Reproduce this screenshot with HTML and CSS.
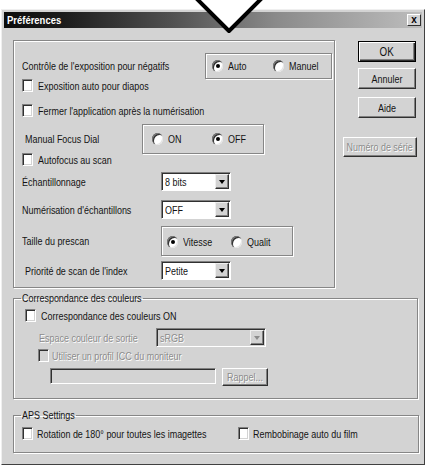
FILE: index.html
```html
<!DOCTYPE html>
<html lang="fr">
<head>
<meta charset="utf-8">
<title>Préférences</title>
<link rel="stylesheet" href="styles.css">
</head>
<body>
<svg class="chevron" width="426" height="40" viewBox="0 0 426 40"><path d="M194,-4 L229,31 L264,-4" fill="#fff" stroke="#000" stroke-width="4" stroke-linejoin="round"/></svg>
<div class="dialog">
  <div class="titlebar"><span class="title"><span class="t">Préférences</span></span><span class="close">x</span></div>
  <div class="client">
    <div class="top">
      <div class="mainbox">
        <div class="row r1">
          <span class="lbl w183"><span class="t">Contrôle de l'exposition pour négatifs</span></span>
          <div class="rgroup g1">
            <span class="opt o61"><span class="radio on"></span><span class="t">Auto</span></span>
            <span class="opt"><span class="radio"></span><span class="t">Manuel</span></span>
          </div>
        </div>
        <div class="row r2"><span class="cb"></span><span class="cbt"><span class="t">Exposition auto pour diapos</span></span></div>
        <div class="row r3"><span class="cb"></span><span class="cbt"><span class="t">Fermer l'application après la numérisation</span></span></div>
        <div class="row r4">
          <span class="lbl w120 ind"><span class="t">Manual Focus Dial</span></span>
          <div class="rgroup g4">
            <span class="opt o60"><span class="radio"></span><span class="t">ON</span></span>
            <span class="opt"><span class="radio on"></span><span class="t">OFF</span></span>
          </div>
        </div>
        <div class="row r5"><span class="cb"></span><span class="cbt"><span class="t">Autofocus au scan</span></span></div>
        <div class="row r6"><span class="lbl w139"><span class="t">Échantillonnage</span></span><div class="sel"><span class="val"><span class="t">8 bits</span></span><span class="drop"></span></div></div>
        <div class="row r7"><span class="lbl w139"><span class="t">Numérisation d'échantillons</span></span><div class="sel"><span class="val"><span class="t">OFF</span></span><span class="drop"></span></div></div>
        <div class="row r8">
          <span class="lbl w139"><span class="t">Taille du prescan</span></span>
          <div class="rgroup g8">
            <span class="opt o64"><span class="radio on"></span><span class="t">Vitesse</span></span>
            <span class="opt"><span class="radio"></span><span class="t">Qualit</span></span>
          </div>
        </div>
        <div class="row r9"><span class="lbl w139 ind"><span class="t">Priorité de scan de l'index</span></span><div class="sel"><span class="val"><span class="t">Petite</span></span><span class="drop"></span></div></div>
      </div>
      <div class="btns">
        <div class="btn default ok"><span class="t c">OK</span></div>
        <div class="btn cancel"><span class="t c">Annuler</span></div>
        <div class="btn help"><span class="t c">Aide</span></div>
        <div class="btn serial disabled"><span class="t c">Numéro de série</span></div>
      </div>
    </div>

    <fieldset class="group color">
      <legend><span class="t lg1">Correspondance des couleurs</span></legend>
      <div class="row c1"><span class="cb"></span><span class="cbt"><span class="t">Correspondance des couleurs ON</span></span></div>
      <div class="row c2"><span class="lbl w117 disabled"><span class="t">Espace couleur de sortie</span></span><div class="sel wide off"><span class="val"><span class="t">sRGB</span></span><span class="drop off"></span></div></div>
      <div class="row c3"><span class="cb off"></span><span class="cbt disabled"><span class="t">Utiliser un profil ICC du moniteur</span></span></div>
      <div class="row c4"><span class="field"></span><span class="btn small disabled"><span class="t c">Rappel...</span></span></div>
    </fieldset>

    <fieldset class="group aps">
      <legend><span class="t lg2">APS Settings</span></legend>
      <div class="row a1">
        <span class="item w216"><span class="cb"></span><span class="cbt"><span class="t">Rotation de 180° pour toutes les imagettes</span></span></span>
        <span class="item"><span class="cb"></span><span class="cbt"><span class="t">Rembobinage auto du film</span></span></span>
      </div>
    </fieldset>
  </div>
</div>
</body>
</html>
```

FILE: styles.css
```css
html, body {
  margin: 0;
  padding: 0;
  overflow: hidden;
  background: #fff;
}
body {
  font-family: "Liberation Sans", Arial, sans-serif;
  font-size: 11px;
  color: #141414;
  position: relative;
  width: 426px;
  height: 465px;
}
.t {
  display: inline-block;
  transform: scaleX(0.815);
  transform-origin: 0 50%;
  white-space: nowrap;
}
.t.c { transform-origin: 50% 50%; }
.lg1 { margin-right: -27px; }
.lg2 { margin-right: -12px; }
.chevron {
  position: absolute;
  left: 0;
  top: 0;
  z-index: 5;
}
.dialog {
  margin: 9px 0 0 1px;
  width: 418px;
  height: 450px;
  padding: 2px;
  border: 1px solid;
  border-color: #efefef #404040 #404040 #efefef;
  background: #d3d3d3;
}
.titlebar {
  height: 16px;
  display: flex;
  align-items: center;
  background: linear-gradient(90deg, #0c0c0c 0%, #1c1c1c 14%, #505050 40%, #8a8a8a 65%, #bdbdbd 100%);
}
.title {
  font-weight: bold;
  font-size: 11px;
  color: #fff;
  padding-left: 3px;
  flex: 1;
}
.title .t { transform: scaleX(0.86); }
.close {
  width: 14px;
  height: 12px;
  margin-right: 1px;
  box-sizing: border-box;
  background: #d3d3d3;
  border: 1px solid;
  border-color: #fff #303030 #303030 #fff;
  color: #000;
  font-weight: bold;
  font-size: 10px;
  line-height: 9px;
  text-align: center;
}
.client {
  padding-left: 9px;
}
.top {
  display: flex;
  margin-top: 12px;
}
.mainbox {
  width: 322px;
  height: 248px;
  box-sizing: border-box;
  border: 1px solid #868686;
  box-shadow: inset 1px 1px 0 #fff, 1px 1px 0 #fff;
  padding-left: 8px;
  display: flex;
  flex-direction: column;
}
.row {
  display: flex;
  align-items: center;
  white-space: nowrap;
}
.r1 { margin-top: 12px; height: 26px; }
.r2 { height: 13px; }
.r3 { margin-top: 12px; height: 13px; }
.r4 { margin-top: 7px; height: 30px; }
.r5 { margin-top: -1px; height: 13px; }
.r6 { margin-top: 6px; height: 19px; }
.r7 { margin-top: 9px; height: 19px; }
.r8 { margin-top: 7px; height: 30px; }
.r9 { margin-top: 5px; height: 19px; }

.lbl { flex: none; box-sizing: border-box; }
.w183 { width: 183px; }
.w120 { width: 120px; }
.w139 { width: 139px; }
.w117 { width: 117px; }
.ind { padding-left: 3px; }

.rgroup {
  box-sizing: border-box;
  border: 1px solid #868686;
  box-shadow: inset 1px 1px 0 #fff, 1px 1px 0 #fff;
  display: flex;
  align-items: center;
  align-self: stretch;
}
.g1 { width: 127px; padding-left: 6px; }
.g4 { width: 122px; padding-left: 9px; }
.g8 { width: 132px; padding-left: 5px; padding-top: 2px; }
.opt {
  display: flex;
  align-items: center;
  gap: 5px;
}
.o61 { width: 61px; }
.o60 { width: 60px; }
.o64 { width: 64px; }

.radio {
  width: 11px;
  height: 12px;
  border-radius: 50%;
  background: #fff;
  box-shadow: inset 1px 1px 0 #7a7a7a, inset 2px 2px 0 #303030, inset -1px -1px 0 #e4e4e4;
  position: relative;
  flex: none;
}
.radio.on::after {
  content: "";
  position: absolute;
  left: 4px;
  top: 4px;
  width: 4px;
  height: 4px;
  border-radius: 50%;
  background: #000;
}

.cb {
  width: 11px;
  height: 13px;
  box-sizing: border-box;
  flex: none;
  background: #fff;
  border: 1px solid;
  border-color: #808080 #fff #fff #808080;
  box-shadow: inset 1px 1px 0 #303030, inset -1px -1px 0 #d3d3d3;
}
.cb.off { background: #d3d3d3; }
.cbt { margin-left: 5px; }

.sel {
  width: 70px;
  height: 19px;
  box-sizing: border-box;
  border: 1px solid;
  border-color: #808080 #fff #fff #808080;
  box-shadow: inset 1px 1px 0 #303030;
  background: #fff;
  display: flex;
  align-items: center;
  padding-left: 3px;
}
.sel.wide { width: 110px; }
.sel.off { background: #d3d3d3; color: #8c8c8c; text-shadow: 1px 1px 0 #fff; }
.val { flex: 1; min-width: 0; }
.drop {
  width: 14px;
  height: 15px;
  flex: none;
  box-sizing: border-box;
  margin-right: 1px;
  background: #d3d3d3;
  border: 1px solid;
  border-color: #efefef #303030 #303030 #efefef;
  box-shadow: inset -1px -1px 0 #808080;
  display: flex;
  align-items: center;
  justify-content: center;
}
.drop::after {
  content: "";
  border-left: 3px solid transparent;
  border-right: 3px solid transparent;
  border-top: 4px solid #000;
  margin-top: 1px;
}
.drop.off::after { border-top-color: #8c8c8c; }

.btns {
  margin-left: 8px;
  width: 74px;
  display: flex;
  flex-direction: column;
  align-items: flex-end;
}
.btn {
  box-sizing: border-box;
  background: #d3d3d3;
  border: 1px solid;
  border-color: #fff #303030 #303030 #fff;
  box-shadow: inset -1px -1px 0 #808080;
  display: flex;
  align-items: center;
  justify-content: center;
  white-space: nowrap;
}
.btn.default {
  border: 1px solid #000;
  box-shadow: inset 1px 1px 0 #fff, inset -1px -1px 0 #303030, inset -2px -2px 0 #808080;
}
.ok { margin-top: 1px; width: 58px; height: 21px; margin-right: 1px; font-size: 12px; }
.cancel { margin-top: 6px; width: 58px; height: 21px; margin-right: 1px; }
.help { margin-top: 8px; width: 58px; height: 21px; margin-right: 1px; }
.serial { margin-top: 19px; width: 74px; height: 20px; }
.disabled { color: #8c8c8c; text-shadow: 1px 1px 0 #fff; }

.group {
  margin: 0;
  padding: 0 0 12px 0;
  border: 1px solid #868686;
  box-shadow: inset 1px 1px 0 #fff, 1px 1px 0 #fff;
  min-width: 0;
  display: flex;
  flex-direction: column;
}
.group legend {
  margin-left: 7px;
  padding: 0 1px;
  line-height: 13px;
  font-size: 11px;
}
.color { margin-top: 4px; width: 403px; padding-bottom: 12px; }
.c1 { margin-top: 4px; height: 13px; padding-left: 11px; }
.c2 { margin-top: 6px; height: 19px; padding-left: 25px; }
.c3 { margin-top: 2px; height: 13px; padding-left: 24px; }
.c3 .cbt { margin-left: 3px; }
.c4 { margin-top: 6px; height: 18px; padding-left: 36px; align-items: flex-start; }
.field {
  width: 166px;
  height: 16px;
  box-sizing: border-box;
  border: 1px solid;
  border-color: #808080 #fff #fff #808080;
  box-shadow: inset 1px 1px 0 #303030;
  background: #d3d3d3;
}
.btn.small { margin-left: 6px; width: 46px; height: 18px; }

.aps { margin-top: 10px; width: 404px; padding-bottom: 12px; }
.a1 { margin-top: 5px; height: 13px; padding-left: 8px; }
.item { display: flex; align-items: center; }
.item .cbt { margin-left: 4px; }
.w216 { width: 216px; }
```
